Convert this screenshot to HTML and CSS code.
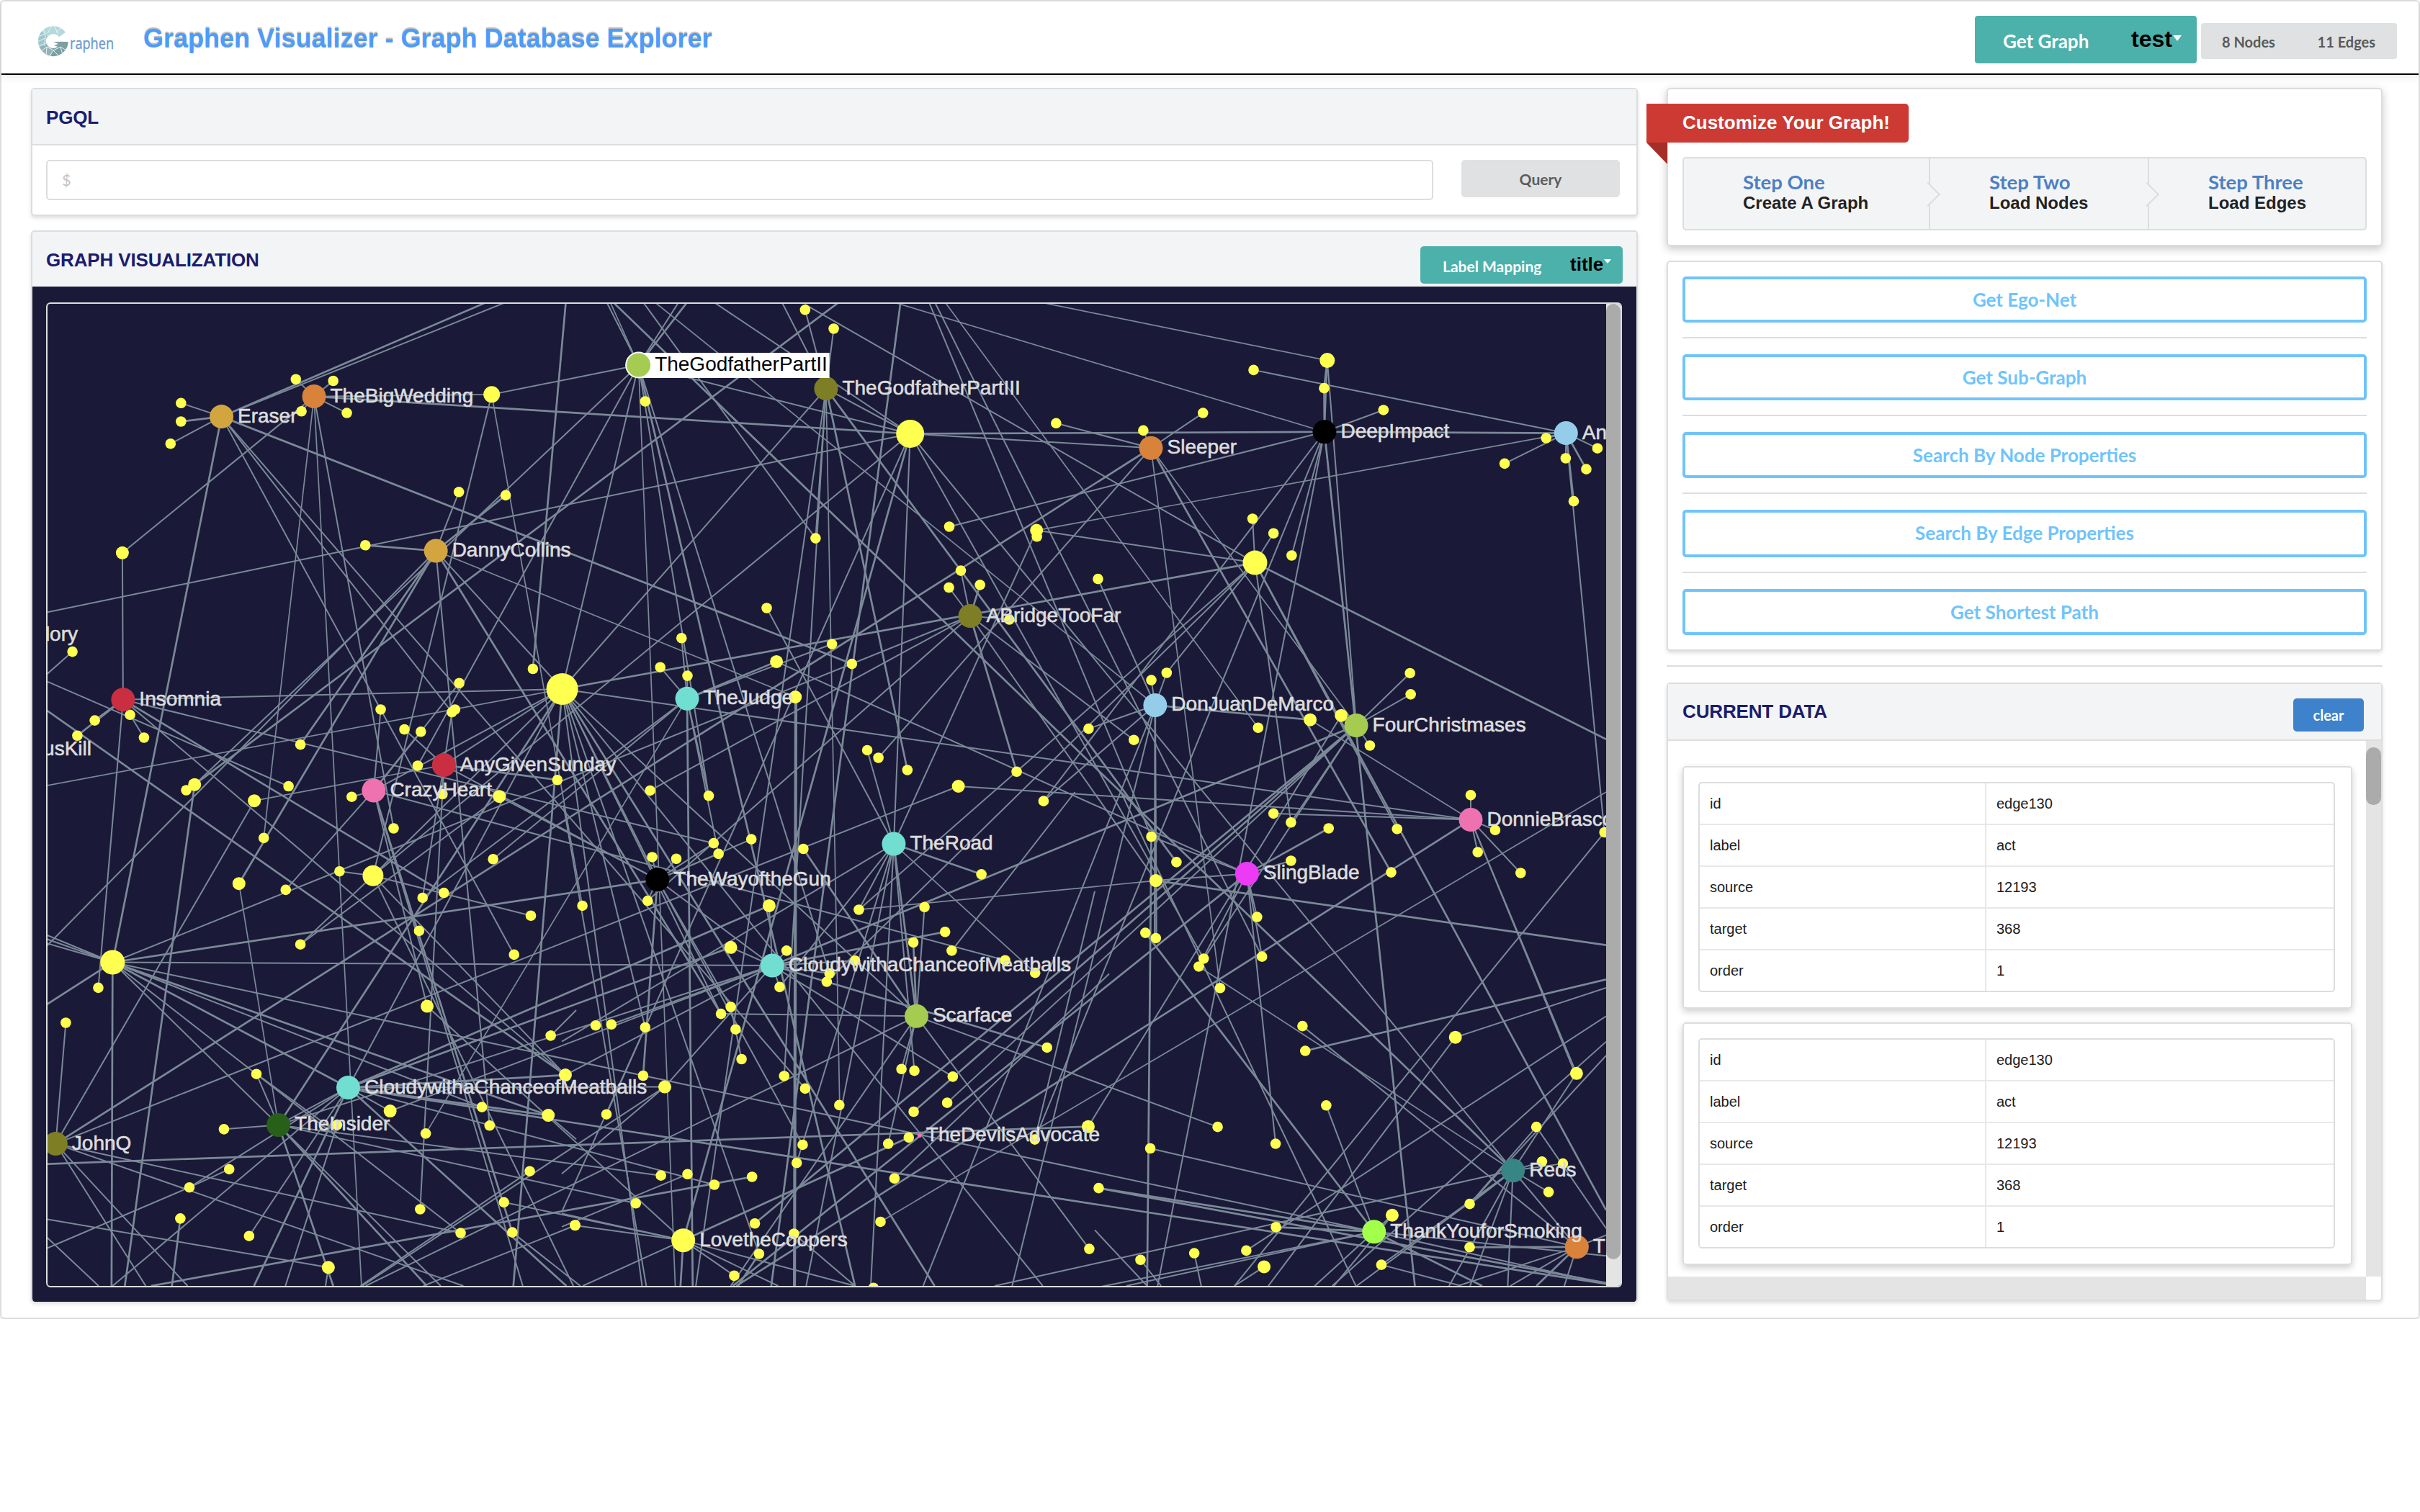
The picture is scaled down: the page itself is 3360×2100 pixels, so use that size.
FILE: index.html
```html
<!DOCTYPE html>
<html lang="en">
<head>
<meta charset="utf-8">
<title>Graphen Visualizer</title>
<link rel="stylesheet" href="styles.css">
</head>
<body>
<div class="frame">
  <header class="topbar">
    <svg class="logo" width="110" height="48" viewBox="0 0 110 48">
      <path d="M34.5 14A15.5 15.5 0 0 0 8.5 15.500" fill="none" stroke="#b4d9dc" stroke-width="11"/>
      <path d="M10 13.200A15.500 15.500 0 0 0 9 31.500" fill="none" stroke="#9fc6cc" stroke-width="11"/>
      <path d="M8 29.500A15.500 15.500 0 0 0 22 38.500" fill="none" stroke="#92b2b6" stroke-width="11"/>
      <path d="M20 38.500A15.500 15.500 0 0 0 37.300 24" fill="none" stroke="#7b9fa3" stroke-width="11"/>
      <path d="M22 24h20l-5 10-14-5 6-2z" fill="#7b9fa3"/>
      <path d="M1 17l10-4M8 6l3 10M21 1l-7 11M22 1l7 12M33 5l-7 6M0 24l11-5M2 30l9-4M11 16l-1 14M5 37l8-6 9 5 10-5 8 5M13 31l-1 12M22 36l-6 9M22 36l8 8M32 31l3 11" fill="none" stroke="#e9f4f5" stroke-width="1"/>
      <text x="45" y="33.500" textLength="61" lengthAdjust="spacingAndGlyphs">raphen</text>
    </svg>
    <h1 class="title">Graphen Visualizer - Graph Database Explorer</h1>
    <div class="get-graph"><span>Get Graph</span><b>test</b><i class="caret"></i></div>
    <div class="stats"><span>8 Nodes</span><span>11 Edges</span></div>
  </header>
  <main class="columns">
    <div class="left">
      <section class="panel pgql">
        <h2>PGQL</h2>
        <div class="query-row"><div class="input">$</div><div class="query">Query</div></div>
      </section>
      <section class="panel viz">
        <div class="viz-head"><h2>GRAPH VISUALIZATION</h2>
          <div class="mapping"><span>Label Mapping</span><b>title</b><i class="caret"></i></div></div>
        <div class="stage"><div class="canvas">
          <svg id="graph" width="2164" height="1364" viewBox="66 422 2164 1364"></svg>
          <div class="track"><div class="thumb"></div></div>
        </div></div>
      </section>
    </div>
    <aside class="right">
      <section class="card custom">
        <div class="ribbon">Customize Your Graph!</div>
        <div class="steps">
          <div class="step one"><b>Step One</b><span>Create A Graph</span></div>
          <div class="step two"><b>Step Two</b><span>Load Nodes</span></div>
          <div class="step three"><b>Step Three</b><span>Load Edges</span></div>
        </div>
      </section>
      <section class="card actions">
        <div class="action">Get Ego-Net</div><hr>
        <div class="action">Get Sub-Graph</div><hr>
        <div class="action">Search By Node Properties</div><hr>
        <div class="action tall">Search By Edge Properties</div><hr>
        <div class="action">Get Shortest Path</div>
      </section>
      <hr class="split">
      <section class="card data">
        <div class="data-head"><h2>CURRENT DATA</h2><div class="clear">clear</div></div>
        <div class="data-body">
          <div class="records">
            <div class="record"><dl><dt>id</dt><dd>edge130</dd><dt>label</dt><dd>act</dd><dt>source</dt><dd>12193</dd><dt>target</dt><dd>368</dd><dt>order</dt><dd>1</dd></dl></div>
            <div class="record"><dl><dt>id</dt><dd>edge130</dd><dt>label</dt><dd>act</dd><dt>source</dt><dd>12193</dd><dt>target</dt><dd>368</dd><dt>order</dt><dd>1</dd></dl></div>
          </div>
          <div class="vbar"><div class="vthumb"></div></div>
          <div class="hbar"></div>
        </div>
      </section>
    </aside>
  </main>
</div>
<script src="graph.js"></script>
</body>
</html>
```
FILE: styles.css
```css
* { box-sizing: border-box; }
body { margin: 0; background: #fff; font-family: Lato, sans-serif; color: #222; }
h1, h2, dl, dd { margin: 0; }
.frame { height: 1832px; border: 2px solid #ddd; border-radius: 6px; box-shadow: 0 2px 4px rgba(0,0,0,.1); }
.topbar { height: 102px; display: flex; align-items: flex-start; border-bottom: 2px solid #000; box-shadow: 0 4px 10px rgba(0,0,0,.08); }
.logo { margin: 32px 0 0 50px; overflow: visible; }
.logo text { font: 21px "Open Sans", sans-serif; fill: #6d9bd2; stroke: #6d9bd2; stroke-width: .4; }
.title { margin: 30px 0 0 37px; width: 800px; white-space: nowrap; font: bold 36px/44px "Liberation Sans", Arial, sans-serif; color: #4d9bfa; text-shadow: 0 -2px 1px #bbb; }
.get-graph { margin: 20px 0 0 auto; width: 308px; height: 66px; background: #4db1ab; border-radius: 4px; color: #fff; display: flex; align-items: center; padding: 3px 0 0 39px; font-size: 26px; font-weight: 700; }
.get-graph b, .mapping b { font-family: "Liberation Sans", Arial, sans-serif; font-weight: 700; color: #000; }
.get-graph span { width: 178px; }
.get-graph b { font-size: 32px; width: 58px; margin-top: -4px; white-space: nowrap; }
.caret { border: 6px solid transparent; border-top: 8px solid #fff; border-bottom: 0; margin-top: -7px; }
.stats { margin: 30px 30px 0 6px; width: 272px; height: 50px; background: #e0e1e2; border-radius: 4px; display: flex; justify-content: space-between; align-items: center; padding: 2px 30px 0 29px; font-size: 20px; font-weight: 700; color: #5a5a5a; }
.columns { display: flex; justify-content: space-between; padding: 18px 50px 0 41px; }
.left { width: 2231px; }
.right { width: 994px; }
.panel, .card { border: 2px solid #dcddde; border-radius: 5px; background: #fff; box-shadow: 0 3px 5px rgba(34,36,38,.15); }
h2 { font: bold 26px/30px "Liberation Sans", Arial, sans-serif; color: #1b1c6d; white-space: nowrap; letter-spacing: -.15px; }
.pgql { height: 178px; margin-bottom: 20px; }
.pgql h2 { height: 78px; padding: 24px 19px; background: #f3f4f5; border-bottom: 2px solid #dcddde; }
.query-row { display: flex; justify-content: space-between; padding: 20px 23px 0 19px; }
.input { width: 1926px; height: 56px; border: 2px solid #dcddde; border-radius: 5px; padding-left: 20px; font: 22px/52px Lato, sans-serif; color: #c4c4c4; }
.query { width: 220px; height: 52px; border-radius: 5px; background: #e0e1e2; text-align: center; font: bold 21px/53px Lato, sans-serif; color: #5c5d5e; }
.viz { height: 1488px; border-bottom: 0; overflow: hidden; }
.viz-head { height: 76px; background: #f3f4f5; display: flex; justify-content: space-between; padding: 24px 20px 0 19px; }
.mapping { margin: -4px -1px 0 0; width: 281px; height: 52px; border-radius: 5px; background: #4db1ab; display: flex; align-items: center; padding: 2px 0 0 31px; color: #fff; font-size: 21px; font-weight: 700; }
.mapping span { width: 177px; }
.mapping b { font-size: 26px; width: 47px; margin-top: -4px; white-space: nowrap; }
.mapping .caret { border-width: 6px 5px 0; margin-top: -12px; }
.stage { height: 1410px; background: #1a1a38; padding: 22px 19px 20px 19px; }
.canvas { height: 1368px; width: 2188px; border: 2px solid #ddd; border-radius: 6px; display: flex; overflow: hidden; }
#graph { display: block; flex: none; }
#graph line { stroke: #7b8998; stroke-width: 2; }
#graph line.strong { stroke-width: 2.7; }
#graph line.thin { stroke-width: 1.7; }
#graph text { font: 28px "Liberation Sans", Arial, sans-serif; fill: #ddd; stroke: #ddd; stroke-width: .6; }
#graph text.active { fill: #000; stroke: none; }
.track { width: 20px; background: #e4e4e4; }
.thumb { height: 1327px; background: #ababab; border-radius: 10px; }
.custom { height: 220px; padding: 20px 20px 0; margin-bottom: 20px; box-shadow: 0 4px 12px rgba(34,36,38,.25); }
.ribbon { position: relative; margin-left: -50px; width: 364px; height: 54px; padding-left: 50px; background: #cc3a33; border-radius: 0 5px 5px 0; color: #fff; font: bold 26px/53px "Liberation Sans", Arial, sans-serif; white-space: nowrap; }
.ribbon::after { content: ""; position: absolute; left: 0; top: 54px; border-top: 30px solid #a62e28; border-left: 29px solid transparent; }
.steps { margin-top: 20px; height: 102px; border: 2px solid #dcddde; border-radius: 5px; background: #f3f4f5; display: flex; overflow: hidden; }
.step { position: relative; display: flex; flex-direction: column; padding: 17px 0 0 82px; border-right: 2px solid #dcddde; white-space: nowrap; }
.step.one { width: 342px; }
.step.two { width: 304px; }
.step.three { flex: 1; border: 0; }
.step b { font-size: 27.5px; line-height: 32px; color: #4d80c2; }
.step span { font: bold 24px/26px "Liberation Sans", Arial, sans-serif; }
.step.one::after, .step.two::after { content: ""; position: absolute; right: -11px; top: 38px; width: 22px; height: 22px; background: #f3f4f5; border: solid #dcddde; border-width: 2px 2px 0 0; transform: rotate(45deg); z-index: 1; }
.actions { height: 542px; padding: 20px; }
.action { height: 64px; border: 4px solid #70c4fb; border-radius: 5px; text-align: center; font-size: 26px; line-height: 56px; font-weight: 700; color: #70c4fb; }
.action.tall { height: 66px; }
hr { border: 0; border-top: 2px solid #dcddde; margin: 20px 0 22px; }
.split { margin: 20px 0 22px; }
.data { height: 859px; }
.data-head { height: 79px; background: #f3f4f5; border-bottom: 2px solid #dcddde; display: flex; justify-content: space-between; padding: 23px 24px 0 20px; }
.clear { width: 98px; height: 46px; margin-top: -3px; border-radius: 5px; background: #3d82ca; color: #fff; text-align: center; font-size: 20px; font-weight: 700; line-height: 46px; }
.data-body { display: grid; grid-template: 744px 32px / 969px 21px; }
.records { padding: 35px 19px 0 20px; }
.record { height: 337px; margin-bottom: 19px; padding: 20px 22px 0 20px; border: 2px solid #dcddde; border-radius: 5px; box-shadow: 0 4px 10px rgba(34,36,38,.22); }
dl { height: 292px; border: 2px solid #dcddde; border-radius: 5px; display: grid; grid-template: 58px 58px 58px 58px 56px / 398px 1fr; font: 20px "Liberation Sans", Arial, sans-serif; color: #1c1c1c; overflow: hidden; }
dt, dd { padding-left: 14px; line-height: 57px; border-bottom: 2px solid #e8e8e9; height: 58px; }
dt { border-right: 2px solid #e8e8e9; }
dt:nth-last-child(2), dd:last-child { border-bottom: 0; }
.vbar { background: #e4e4e4; padding-top: 9px; }
.vthumb { height: 80px; background: #ababab; border-radius: 10px; }
.hbar { background: #e4e4e4; }
```
FILE: graph.js
```js
// The graph is stored in six tiles; a point is "<tile><x>,<y>" in tile units.
const origin = {A:[40,400],B:[780,400],C:[1520,400],D:[40,1100],E:[780,1100],F:[1520,1100]};
const SX = 760/1568, SY = 720/1568;
const hubs = {
 er:['A552,389','#d3a53f','Eraser'], bw:['A817,328','#d8823a','TheBigWedding'], dc:['A1166,795','#d3a53f','DannyCollins'],
 ins:['A270,1245','#c92f41','Insomnia'], ag:['A1189,1443','#c92f41','AnyGivenSunday'], ch:['A988,1520','#ef72b0','CrazyHeart'],
 y1:['A1528,1213','#ffff4f','',22], w2:['A1326,322','#ffff4f','',11.5], g3:['B757,304','#7e7e25','TheGodfatherPartIII'],
 y2:['B998,441','#ffff4f','',19.5], ab:['B1170,992','#7e7e25','ABridgeTooFar'], ju:['B359,1242','#70dfd1','TheJudge'],
 sl:['C161,484','#d8823a','Sleeper'], di:['C658,435','#000','DeepImpact'], an:['C1350,439','#94cde9','An'],
 y3:['C459,831','#ffff4f','',17], dj:['C173,1262','#94cde9','DonJuanDeMarco'], fc:['C749,1323','#a5cc51','FourChristmases'],
 yt:['C666,219','#ffff4f','',10.5], y4:['D240,515','#ffff4f','',17], c1:['D915,894','#70dfd1','CloudywithaChanceofMeatballs'],
 ti:['D715,1007','#285f19','TheInsider'], jq:['D77,1064','#7e7e25','JohnQ'], y5:['D986,253','#ffff4f','',14.5],
 rd:['E951,157','#70dfd1','TheRoad'], gun:['E274,265','#000','TheWayoftheGun'], c2:['E603,525','#70dfd1','CloudywithaChanceofMeatballs'],
 sc:['E1016,678','#a5cc51','Scarface'], dv:['E1025,1039','#ef72b0','TheDevilsAdvocate',3], lc:['E348,1356','#ffff4f','LovetheCoopers'],
 db:['F1077,84','#ef72b0','DonnieBrasco'], sb:['F436,247','#ec3af5','SlingBlade'], re:['F1198,1145','#378585','Reds'],
 ty:['F800,1330','#a2ff4a','ThankYouforSmoking'], t:['F1381,1376','#d8823a','T'], g2:['B220,233','#a5cc51','TheGodfatherPartII']
};
const small = {
 A:'436,348 436,404 406,471 765,276 872,281 781,373 911,378 1232,617 1366,627 964,778 125,1100 189,1308 139,1354 290,1291 330,1360 778,1381 744,1507 451,1519 1444,1152 1233,1195 1008,1275 1221,1275 1212,1283 1076,1335 1123,1342 1114,1445 925,1539 1185,1531 1514,1488',
 B:'697,66 779,123 239,343 1416,409 727,757 1110,722 1361,752 1143,855 1109,906 1198,898 1536,880 1282,1003 587,968 343,1059 282,1147 360,1173 774,1077 831,1137 875,1398 907,1421 990,1458 253,1520 421,1536 1303,1463 1509,1333 1380,1552',
 C:'455,248 657,303 827,369 310,378 139,431 1293,454 1174,531 1440,485 1349,515 1408,548 1372,645 452,698 512,742 564,809 903,1165 905,1229 788,1384 206,1164 162,1186 468,1330 112,1367 1077,1534',
 D:'673,139 1045,110 736,296 890,240 1330,203 1189,305 1128,320 1438,374 1118,420 778,461 1390,492 199,592 106,698 1495,737 652,853 1298,953 559,1020 883,1007 1137,1033 1320,1009 574,1141 460,1196 1435,1147 434,1290 1121,1262 1361,1241 631,1343 1237,1334 1385,1332 1565,1311',
 E:'259,197 328,202 435,155 449,187 543,143 692,172 1202,249 246,329 59,344 851,356 1039,348 1098,423 1007,455 644,480 1117,480 840,510 1270,509 1356,547 767,549 759,574 624,590 484,650 456,671 97,706 142,703 239,712 498,718 515,808 1390,773 973,838 1010,843 637,859 233,858 1120,861 697,897 795,947 1104,940 1008,967 128,975 994,1045 935,1064 1355,1051 690,1067 673,1122 284,1160 360,1156 437,1188 545,1164 953,1169 1538,1198 212,1244 553,1305 913,1300 38,1310 665,1336 565,1397 494,1463 1511,1382 893,1500',
 F:'512,65 562,92 670,110 866,112 162,135 234,212 562,208 849,243 1147,115 1097,182 1220,245 1460,122 465,378 145,426 175,442 479,498 312,504 298,528 359,593 595,708 603,783 663,948 352,1013 159,1078 518,1064 1265,1013 1281,1118 1341,1124 1300,1210 1074,1246 519,1316 434,1387 285,1395 131,1415 1074,1377 821,1430'
};
const medium = {A:'268,801 475,1502 646,1551 1348,1538', B:'1360,733 615,1130 669,1237 1136,1507', C:'617,1306 706,1293',
 D:'602,277 1141,648 1537,856 1035,965 1488,978 858,1438', E:'594,344 484,470 295,892 1508,1012', F:'175,268 1033,742 1380,851 852,1280 485,1436'};
// Trailing "+" marks a strong edge, "-" a thin one.
const edges = `
er A1305,46 +;er A1360,46;er A436,348;er A436,404 +;er A406,471;er y4 +;er A1008,1275;er A1212,1283;er E697,897;er B831,1137 +
bw A765,276;bw A872,281;bw A781,373;bw A911,378;bw w2 -;bw y2 +;bw A268,801;A268,801 ins;bw D673,139 -;bw D953,1494 -;bw D1045,110
w2 g2;w2 y5;w2 E59,344 -;dc A1232,617;dc A1366,627 +;g2 A475,1502;dc A964,778 +;y2 A52,981;dc A778,1381 +;dc D602,277 +;dc D1320,1009;dc y1;dc B669,1237 -;dc E456,671 +
ins y1;y1 A52,1505 -;A52,1190 A744,1507;A52,1278 D1537,856 +;A125,1100 A52,1168;ins A189,1308 +;ins A139,1354 +;ins A290,1291;A290,1291 A330,1360;ins D199,592;ch E1270,509;ins E435,155;ins D1537,856;ins D1189,305 +
A451,1519 A475,1502;A475,1502 D275,1494 +;A475,1502 B790,46 +;g2 A1114,1445;A646,1551 ag -;A1444,1152 A1538,46 +;A1123,1342 A1233,1195;A1123,1342 ch +;ag A1076,1335;A1008,1275 ch;A1008,1275 D1390,492;A1212,1283 ag
y1 ag;y1 ch;y1 y5;y1 ti +;y1 c1;y1 g2;y1 g3;y2 y5;y1 y3 +;y1 db;y1 E230,1494;E5,40 E242,1494;y1 E565,1397;y1 E456,671;y1 E1068,1494 +;y1 sc;y1 E1378,1494;y1 E239,712;y1 gun;y1 D1388,1494 +;ag D1121,1262;ag D1128,320;ag A1514,1488 +;ag A1185,1531;A925,1539 ch
ju B282,1147;ju B343,1059;ju B360,1173;ju B615,1130 +;ju B774,1077;ab B253,1520;ab y4;sl jq +;ju D1128,320;ju D1137,1033 -;ju E375,1494 +;ju B421,1536;ju E449,187
g2 E325,1494 -;g2 B421,1536;g2 E840,1494 +;g2 E767,549;g2 y2;g2 B130,46;g2 B140,46 -;g2 B333,46;g2 B357,46 +;B150,46 re +;B235,46 B727,757;B270,46 dj -;B440,46 y2;B632,46 g3;B697,66 g3;B779,123 g3;B697,50 y3;B970,46 E600,1494 +;B960,46 di -;B1385,46 yt -;B1053,46 F162,135;B1070,46 F479,498;B1100,46 C468,1330 -
g3 E384,1494;g3 B727,757;g3 E637,859;g3 E796,947 -;g3 B990,1458 +;g3 y2;g3 F234,212 +;y2 E128,975;y2 lc +;y2 rd;y2 F312,504;y2 re;y2 di +;y2 sl;B1110,722 di;B1360,733 an -;B1360,733 y3;B1360,733 rd;B1416,409 sl
B1143,855 ab;B1109,906 ab;B1198,898 ab +;B1282,1003 ab;B1536,880 dj;sl B907,1421;sl F359,593 -;sl F849,243 +;sl fc -;ab B1303,1463 +;ab C112,1367;ab F175,268;ab E246,329;B615,1130 sb;B587,968 rd;B875,1398 rd;B669,1237 E665,1494 +;B672,1237 E668,1494 +;B1136,1507 jq;B1136,1507 db;B1509,1333 dj;B1380,1552 dj;y3 E851,356;y3 E759,574
yt C657,303 +;C657,303 di +;yt di;yt fc;di F917,1494 +;C455,248 an;C827,369 di;di C564,809;di F180,1494;di E1355,1051;di B1380,1552;di an +;an C1293,454;an C1174,531;an C1440,485;an C1408,548 +;an C1349,515;an C1372,645 +;an F1460,122;sl C310,378;sl C139,431
y3 C452,698;y3 C512,742;y3 C1465,1365 +;y3 F562,92;y3 F866,112;y3 F1465,1265 +;y3 C206,1164;dj C162,1186;dj C206,1164;dj C617,1306 +;C617,1306 db -;dj F172,442 +;dj F177,442;F162,135 F150,1494 +;dj E1290,1494;dj E1035,1494
fc C903,1165;fc C905,1229;fc C788,1384;fc C706,1293;fc c2 +;fc E553,1305 +;fc E1008,967 +;fc E1104,940;fc F298,528;C706,1293 E1508,1012;C1077,1534 db;F1465,0 E913,1300 -
F512,65 db;F562,92 fc;F670,110 sb +;F562,208 sb;F465,378 sb;F479,498 sb;F518,1064 sb;F162,135 sb;F175,268 sb;F175,268 F1465,463 +;F175,268 E851,356 -;sb E490,1494 +;sb F298,528;db F1147,115;db F1097,182;db F1220,245;db F1380,851;db F1376,851;db E500,1494 +
F1460,122 F400,1494;F1465,678 F434,1387;F485,1436 F400,1494;F1033,742 F497,1494;F1033,742 F1465,592;F603,783 F1465,567 +;F595,708 t;F298,528 re -;F663,948 ty;F352,1013 sc;F159,1078 t;F11,1198 F1465,1485 +;c1 F1465,1488 +;y4 ty;F145,426 ty +;F75,0 F748,1494
F519,1316 ty +;F285,1395 F305,1494;F131,1415 F190,1494;F0,1325 F150,1494;ty F0,1500;ty F90,1494;F852,1280 ty;ty F630,1494;F852,1280 F685,1494;re E1240,1494;re F1281,1118;re F1341,1124;re F1300,1210;re F1074,1246 +;re t;re F1183,1494;re F1015,1494;re F1075,1494;re F750,1494;F1380,851 re;F1265,1013 F1074,1246;F1265,1013 F1465,1320;F1465,755 F680,1494;F1465,797 F1074,1246
t F1074,1377 +;t F1040,1494;t F1190,1494;t F1265,1494 +;t F1345,1494;t F1465,1340;ty F1465,1403;ty F1110,1494 +;F821,1430 F1050,1494;ty F1465,1488;F821,1430 re
y4 D52,433;y4 D52,445;y4 D52,458;dc D52,465;y4 D52,642 +;y4 D237,1494 +;y4 c2;y4 gun +;y4 c1 +;y4 D1488,978 +;y4 D1298,953;y4 ti;y4 D1237,1334;D106,698 jq;D652,853 ti;D652,853 D883,1030;D559,1020 ti;D602,277 ti -;D646,28 jq;D736,296 ch;D890,240 y5;y5 D1438,374;y5 D778,461;D1348,14 D778,461;y5 D1560,1494;y5 D1537,856
ch D1385,1332 +;ch D1415,1494;ch D1141,648;D1141,648 lc;D1330,203 ju;D1348,14 gun;ag gun;c1 E484,470 +;c1 E594,344 +;c1 D1537,856 +;ti c2;D1035,965 c2;c1 D1035,965;c1 D1488,978 +;c1 E295,892;D1537,856 c2
c1 D631,1343;c1 D240,1494;c1 D645,1494 +;D883,1007 D735,1494;c1 D460,1196;c1 D1540,1494 +;D1488,978 D1568,1050;ti E284,1160;ti E212,1244;ti D872,1494 +;ti D1180,1494;ti D1140,1494 +;ti c1;jq D1237,1334;jq D1245,1494;jq D335,1494;jq D455,1494;D52,1125 E1508,1012 +
D460,1196 D574,1141;D460,1196 D52,1380;D434,1290 D410,1494 +;D52,1292 D858,1438;D52,1347 D200,1494;D858,1438 D850,1494;D350,1494 E545,1164 +;D1435,1147 D950,1494;D955,1494 E295,892;sc D965,1494;D1361,1241 lc;D1565,1311 lc;D1385,1332 D1580,1494;D1495,737 D1568,660;D1565,1311 D1130,1494
gun E259,197;gun E328,202;gun E435,155;gun E449,187;gun E543,143;gun E246,329;gun E233,858 +;gun c2;gun E484,650;gun E690,1067;E239,712 E0,1270;E142,703 c2;c2 E484,470;c2 E594,344;c2 E644,480;c2 E624,590;c2 E838,510;c2 E1098,423 +;c2 E767,549;c2 E1390,773 +;c2 E1120,861;c2 E295,892;E456,671 sc
sc E1039,348;sc E1007,455 +;rd sc +;sc E973,838;rd E1010,843;sc E484,1494;sc E935,1064;sc E1511,1382;rd E1202,249 +;rd E1356,547 -;rd E851,356;rd E885,1494;rd E673,1122;rd E700,1494;rd E624,590;E692,172 sc +;rd E0,755;E484,650 E515,808;E1117,480 E1470,0
lc E994,1045 +;lc E0,1275;lc E494,1463;lc E340,1494 +;lc E60,1494;lc E620,1494;lc E840,1494;E295,892 E0,1155;E360,1156 E0,1315;E437,1188 c1;E665,1336 E840,1494;E953,1169 E1568,550;E565,1397 E505,1494 +;E1355,1051 F0,300;E1538,1198 ty +`;

const svg = document.getElementById('graph');
function at(ref) {
  if (hubs[ref]) ref = hubs[ref][0];
  const [x, y] = ref.slice(1).split(',').map(Number), o = origin[ref[0]];
  return [o[0] + x*SX, o[1] + y*SY];
}
function add(tag, attrs, text) {
  const el = document.createElementNS('http://www.w3.org/2000/svg', tag);
  for (const k in attrs) el.setAttribute(k, attrs[k]);
  if (text) el.textContent = text;
  svg.appendChild(el);
}
edges.trim().split(/[;\n]+/).forEach(e => {
  const [from, to, mark] = e.trim().split(' '), a = at(from), b = at(to);
  add('line', {x1:a[0], y1:a[1], x2:b[0], y2:b[1], class: mark === '+' ? 'strong' : mark === '-' ? 'thin' : ''});
});
[[small, 7.3], [medium, 9]].forEach(([set, r]) => {
  for (const tile in set) set[tile].split(' ').forEach(p => {
    const [cx, cy] = at(tile + p);
    add('circle', {cx, cy, r, fill:'#ffff4f'});
  });
});
for (const id in hubs) {
  const [ref, fill, label, r = 16.5] = hubs[id], [cx, cy] = at(ref);
  if (id === 'g2') {
    add('circle', {cx, cy, r:18.5, fill:'#fff'});
    add('rect', {x:cx, y:cy-17, width:265, height:35, fill:'#fff'});
  }
  add('circle', {cx, cy, r, fill});
}
for (const id in hubs) {
  const [ref, , label, r = 16.5] = hubs[id], [cx, cy] = at(ref);
  if (label) add('text', {x:cx + r + 6, y:cy + 8, class: id === 'g2' ? 'active' : ''}, label);
}
// Labels of nodes that lie past the left edge of the view.
add('text', {x:108, y:890, 'text-anchor':'end'}, 'lory');
add('text', {x:127, y:1049, 'text-anchor':'end'}, 'usKill');
```
